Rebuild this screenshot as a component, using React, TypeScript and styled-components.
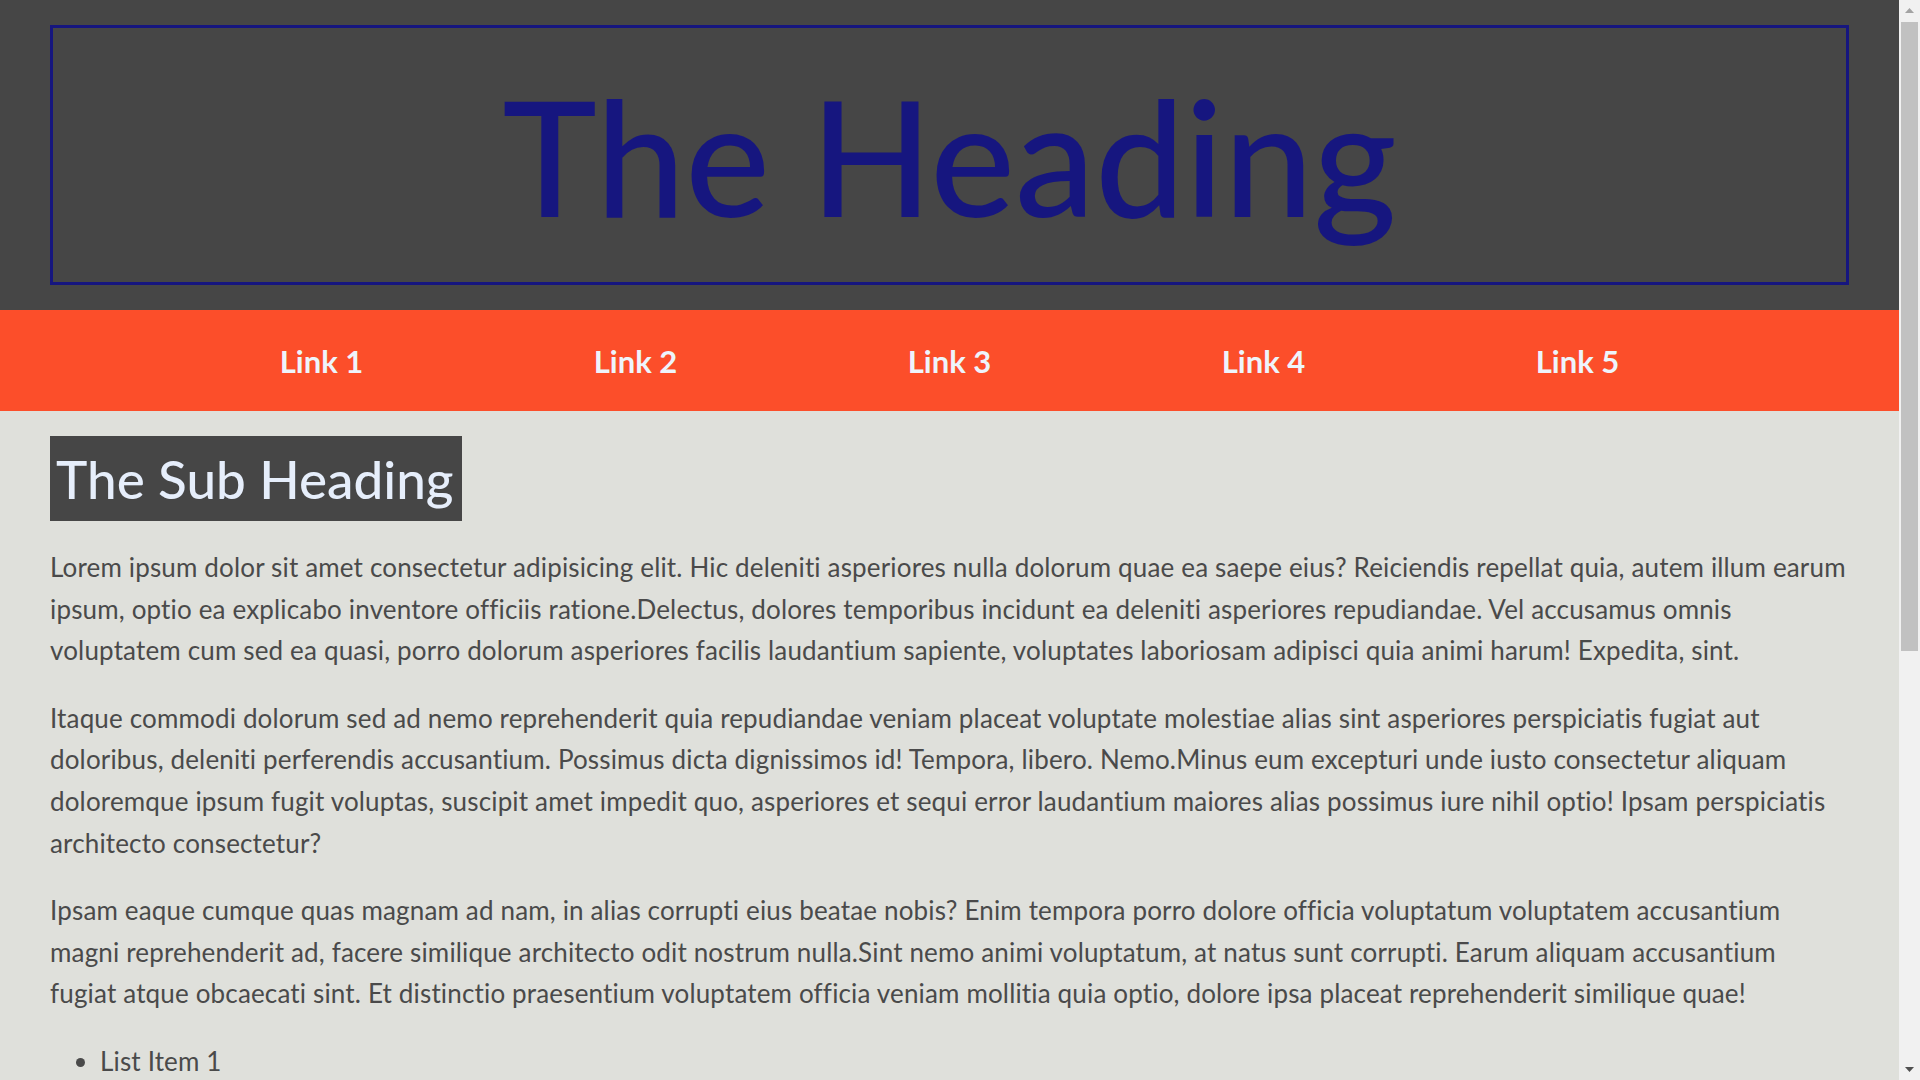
import React from "react";
import styled, { createGlobalStyle } from "styled-components";

const GlobalStyle = createGlobalStyle`
  html, body {
    margin: 0;
    padding: 0;
  }
  body {
    background: #dfe0db;
    font-family: "Lato", "Noto Sans", sans-serif;
    color: #4a4a4a;
  }
`;

const Shell = styled.div`
  display: flex;
  align-items: flex-start;
`;

const Page = styled.div`
  flex: 1;
  min-width: 0;
`;

const ScrollRail = styled.div`
  position: sticky;
  top: 0;
  width: 21px;
  height: 100vh;
  flex: none;
  background: #f1f1f1;
  display: flex;
  flex-direction: column;
  align-items: center;
`;

const ArrowButton = styled.div`
  height: 21px;
  width: 21px;
  display: flex;
  align-items: center;
  justify-content: center;
  flex: none;
`;

const ThumbTrack = styled.div`
  flex: 1;
  width: 100%;
  display: flex;
  flex-direction: column;
  align-items: center;
  padding-top: 1px;
`;

const Thumb = styled.div`
  width: 17px;
  height: 629px;
  background: #c1c1c1;
`;

const Header = styled.header`
  background: #464646;
  padding: 25px 50px;
`;

const Heading = styled.h1`
  margin: 0;
  border: 3px solid #16167f;
  color: #16167f;
  text-align: center;
  font-size: 160px;
  font-weight: 500;
  line-height: 254px;
`;

const Nav = styled.nav`
  background: #fc4e2a;
  height: 101px;
  display: flex;
  align-items: center;
  justify-content: center;
`;

const NavList = styled.ul`
  list-style: none;
  margin: 0;
  padding: 0;
  display: flex;
`;

const NavItem = styled.li`
  width: 314px;
  text-align: center;
`;

const NavLink = styled.a`
  color: #eef4fb;
  text-decoration: none;
  font-size: 31px;
  font-weight: 700;
`;

const Main = styled.main`
  box-sizing: border-box;
  min-height: 1371px;
  padding: 25px 50px 40px;
`;

const SubHeading = styled.h2`
  display: inline-block;
  margin: 0;
  padding: 0 9px 0 6px;
  background: #464646;
  color: #e6eefb;
  font-size: 53px;
  font-weight: 500;
  line-height: 85px;
`;

const Para = styled.p`
  margin: 26px 0;
  font-size: 26px;
  line-height: 41.6px;
  letter-spacing: 0.16px;
`;

const List = styled.ul`
  margin: 26px 0;
  padding-left: 50px;
  font-size: 26px;
  line-height: 41.6px;
  letter-spacing: 0.16px;
`;

const links = ["Link 1", "Link 2", "Link 3", "Link 4", "Link 5"];

const paragraphs = [
  "Lorem ipsum dolor sit amet consectetur adipisicing elit. Hic deleniti asperiores nulla dolorum quae ea saepe eius? Reiciendis repellat quia, autem illum earum ipsum, optio ea explicabo inventore officiis ratione.Delectus, dolores temporibus incidunt ea deleniti asperiores repudiandae. Vel accusamus omnis voluptatem cum sed ea quasi, porro dolorum asperiores facilis laudantium sapiente, voluptates laboriosam adipisci quia animi harum! Expedita, sint.",
  "Itaque commodi dolorum sed ad nemo reprehenderit quia repudiandae veniam placeat voluptate molestiae alias sint asperiores perspiciatis fugiat aut doloribus, deleniti perferendis accusantium. Possimus dicta dignissimos id! Tempora, libero. Nemo.Minus eum excepturi unde iusto consectetur aliquam doloremque ipsum fugit voluptas, suscipit amet impedit quo, asperiores et sequi error laudantium maiores alias possimus iure nihil optio! Ipsam perspiciatis architecto consectetur?",
  "Ipsam eaque cumque quas magnam ad nam, in alias corrupti eius beatae nobis? Enim tempora porro dolore officia voluptatum voluptatem accusantium magni reprehenderit ad, facere similique architecto odit nostrum nulla.Sint nemo animi voluptatum, at natus sunt corrupti. Earum aliquam accusantium fugiat atque obcaecati sint. Et distinctio praesentium voluptatem officia veniam mollitia quia optio, dolore ipsa placeat reprehenderit similique quae!",
];

const items = ["List Item 1", "List Item 2", "List Item 3", "List Item 4", "List Item 5"];

export default function App() {
  return (
    <>
      <GlobalStyle />
      <Shell>
        <Page>
          <Header>
            <Heading>The Heading</Heading>
          </Header>
          <Nav>
            <NavList>
              {links.map((l) => (
                <NavItem key={l}>
                  <NavLink href="#">{l}</NavLink>
                </NavItem>
              ))}
            </NavList>
          </Nav>
          <Main>
            <SubHeading>The Sub Heading</SubHeading>
            {paragraphs.map((p, i) => (
              <Para key={i}>{p}</Para>
            ))}
            <List>
              {items.map((it) => (
                <li key={it}>{it}</li>
              ))}
            </List>
          </Main>
        </Page>
        <ScrollRail aria-hidden="true">
          <ArrowButton>
            <svg width="9" height="5" viewBox="0 0 9 5">
              <polygon points="0,5 4.5,0 9,5" fill="#a3a3a3" />
            </svg>
          </ArrowButton>
          <ThumbTrack>
            <Thumb />
          </ThumbTrack>
          <ArrowButton>
            <svg width="9" height="5" viewBox="0 0 9 5">
              <polygon points="0,0 4.5,5 9,0" fill="#505050" />
            </svg>
          </ArrowButton>
        </ScrollRail>
      </Shell>
    </>
  );
}
